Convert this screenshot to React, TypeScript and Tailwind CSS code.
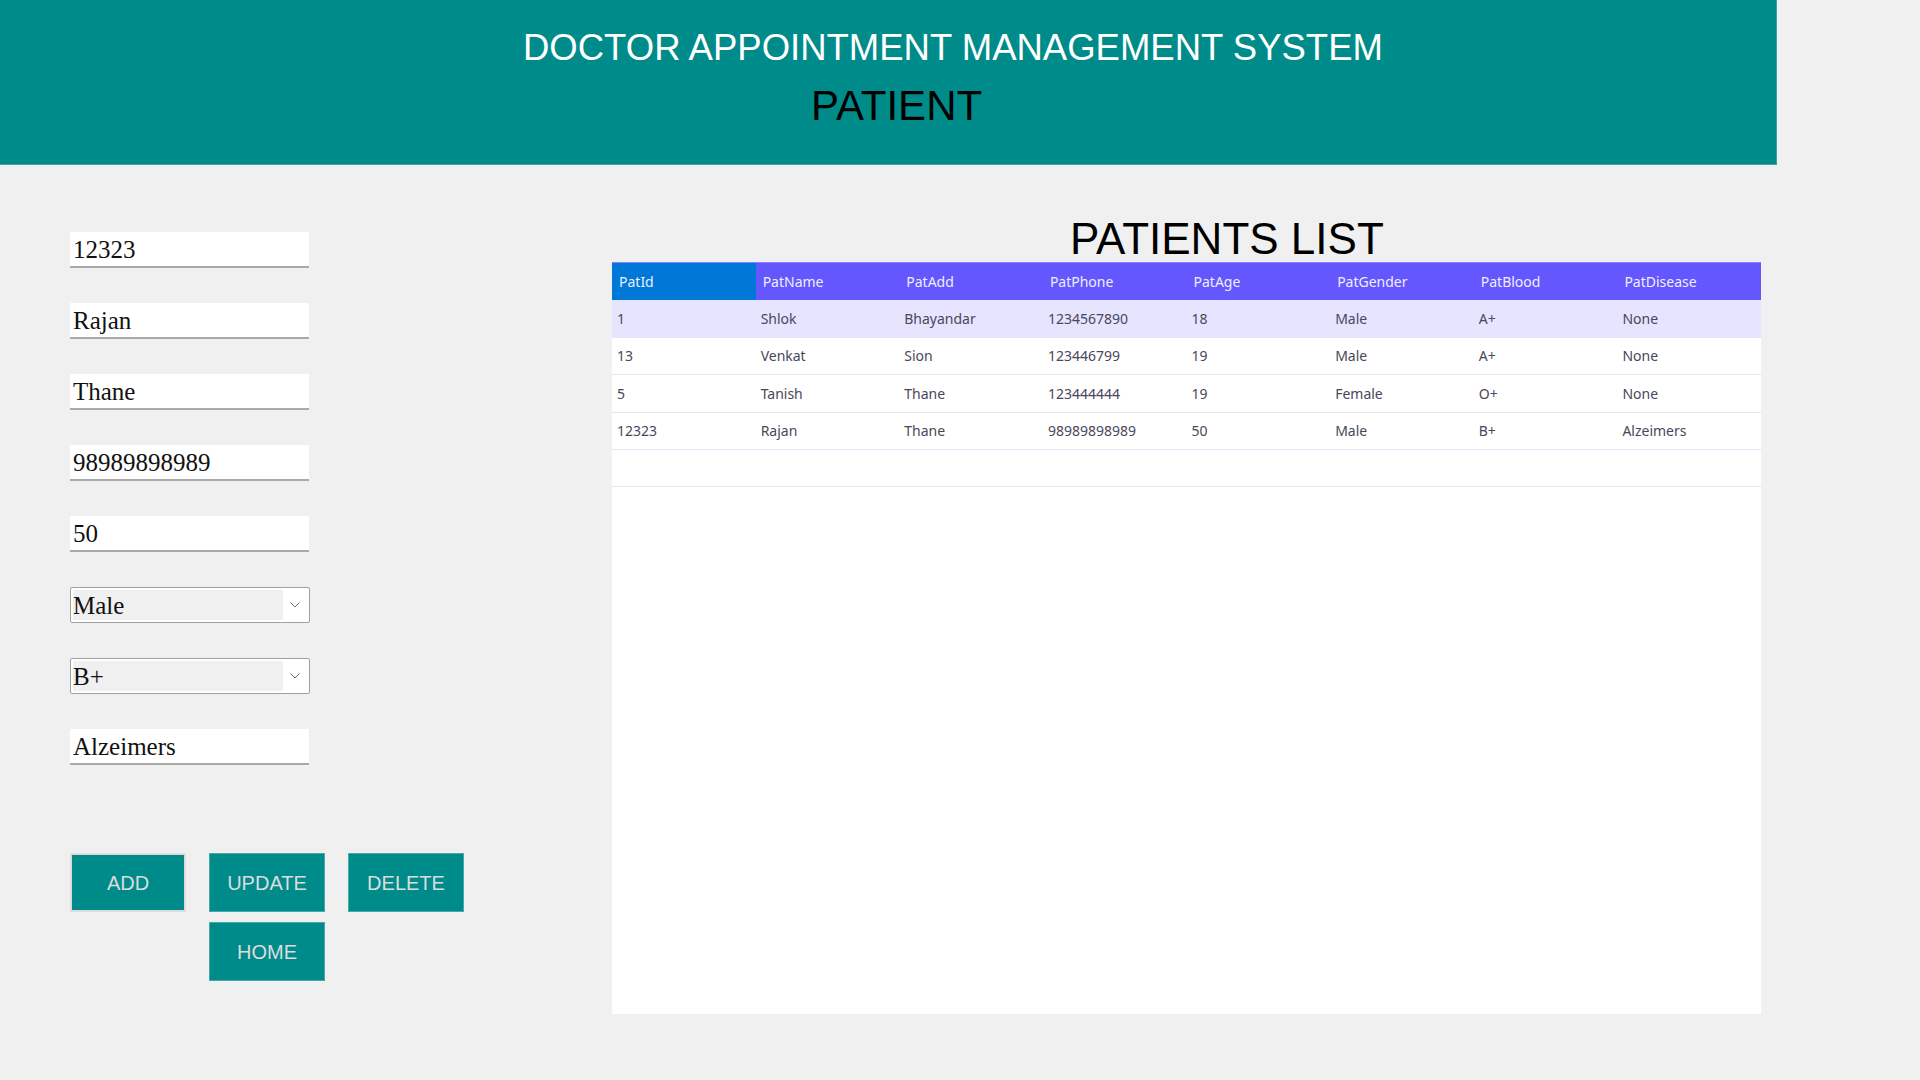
import React from "react";

const rows = [
  ["1", "Shlok", "Bhayandar", "1234567890", "18", "Male", "A+", "None"],
  ["13", "Venkat", "Sion", "123446799", "19", "Male", "A+", "None"],
  ["5", "Tanish", "Thane", "123444444", "19", "Female", "O+", "None"],
  ["12323", "Rajan", "Thane", "98989898989", "50", "Male", "B+", "Alzeimers"],
];

const cols = ["PatId", "PatName", "PatAdd", "PatPhone", "PatAge", "PatGender", "PatBlood", "PatDisease"];

function TextBox({ value }: { value: string }) {
  return (
    <div className="w-[239px] h-[36px] bg-white border-b-2 border-[#a9a9a9] flex items-center pl-[3px] text-[25px] text-[#111] leading-none" style={{ fontFamily: '"Liberation Serif", "Times New Roman", serif' }}>
      {value}
    </div>
  );
}

function Combo({ value }: { value: string }) {
  return (
    <div className="w-[240px] h-[36px] bg-white border border-[#a0a0a0] rounded-[2px] flex items-center p-[2px]">
      <div className="flex-1 h-full bg-[#f0f0f0] flex items-center text-[25px] text-[#111] leading-none" style={{ fontFamily: '"Liberation Serif", "Times New Roman", serif' }}>
        {value}
      </div>
      <div className="w-[24px] h-full flex items-center justify-center">
        <svg width="10" height="6" viewBox="0 0 10 6" fill="none">
          <path d="M0.5 0.5 L5 5 L9.5 0.5" stroke="#707070" strokeWidth="1" />
        </svg>
      </div>
    </div>
  );
}

function Btn({ label, extra }: { label: string; extra?: string }) {
  return (
    <div className={"w-[116px] h-[59px] bg-[#008b8b] flex items-center justify-center text-[20px] text-[#dcdcdc] " + (extra || "border border-[#4aa8a8]")}>
      {label}
    </div>
  );
}

export default function App() {
  return (
    <div className="w-[1920px] min-h-[1080px] bg-[#f0f0f0] overflow-hidden" style={{ fontFamily: '"Liberation Sans", Arial, sans-serif' }}>
      <div className="w-[1777px] h-[165px] bg-[#008b8b] border-b border-r border-[#3aa3a3]">
        <div className="pt-[30px] pl-[523px] text-[36.5px] leading-none text-white whitespace-nowrap">
          DOCTOR APPOINTMENT MANAGEMENT SYSTEM
        </div>
        <div className="mt-[18px] pl-[811px] text-[42px] leading-none text-black whitespace-nowrap">
          PATIENT
        </div>
      </div>

      <div className="flex">
        <div className="w-[612px] pt-[67px] pl-[70px]">
          <div className="flex flex-col gap-[35px]">
            <TextBox value="12323" />
            <TextBox value="Rajan" />
            <TextBox value="Thane" />
            <TextBox value="98989898989" />
            <TextBox value="50" />
            <Combo value="Male" />
            <Combo value="B+" />
            <TextBox value="Alzeimers" />
          </div>
          <div className="mt-[88px] grid grid-cols-[116px_116px_116px] gap-x-[23px] gap-y-[10px]">
            <Btn label="ADD" extra="border-2 border-[#dcdcdc]" />
            <Btn label="UPDATE" />
            <Btn label="DELETE" />
            <div />
            <Btn label="HOME" />
          </div>
        </div>

        <div className="w-[1149px] pt-[52px]">
          <div className="pl-[458px] text-[44px] leading-none text-black whitespace-nowrap h-[45px]">
            PATIENTS LIST
          </div>
          <div className="h-[752px] bg-white" style={{ fontFamily: '"Noto Sans", "Open Sans", sans-serif' }}>
            <div className="grid grid-cols-8 h-[38px] bg-[#6557fe] text-[#eeeeff] text-[14px] border-t border-[#8a80ff]">
              {cols.map((c, i) => (
                <div key={c} className={"flex items-center pl-[7px] " + (i === 0 ? "bg-[#0078d7]" : "")}>
                  {c}
                </div>
              ))}
            </div>
            {rows.map((r, ri) => (
              <div key={ri} className={"grid grid-cols-8 h-[37.5px] text-[14px] text-[#48485a] border-b border-[#e6e6fa] " + (ri === 0 ? "bg-[#e6e4fe]" : "")}>
                {r.map((v, ci) => (
                  <div key={ci} className="flex items-center pl-[5px]">
                    {v}
                  </div>
                ))}
              </div>
            ))}
            <div className="h-[37px] border-b border-[#e6e6fa]" />
          </div>
        </div>
      </div>
    </div>
  );
}
